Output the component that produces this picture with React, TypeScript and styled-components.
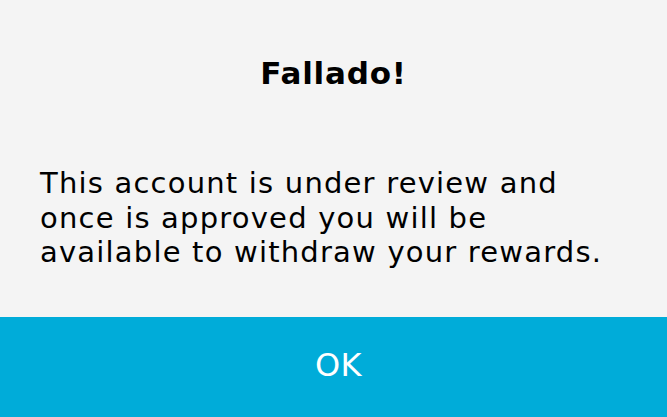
import React from "react";
import styled, { createGlobalStyle } from "styled-components";

const GlobalStyle = createGlobalStyle`
  html, body {
    margin: 0;
    padding: 0;
    height: 100%;
    background: #f4f4f4;
  }
  #root {
    height: 100%;
  }
`;

const Dialog = styled.div`
  display: flex;
  flex-direction: column;
  height: 100vh;
  font-family: "DejaVu Sans", "Open Sans", sans-serif;
  color: #000;
`;

const Body = styled.div`
  flex: 1;
  display: flex;
  flex-direction: column;
  padding: 0 40px;
`;

const Title = styled.h1`
  margin: 53px 0 0;
  font-size: 31px;
  line-height: 40px;
  font-weight: 700;
  letter-spacing: 0.8px;
  text-align: center;
`;

const Message = styled.p`
  margin: 73px 0 0;
  max-width: 580px;
  font-size: 29px;
  line-height: 34.5px;
  font-weight: 400;
  letter-spacing: 1.2px;
`;

const OkButton = styled.button`
  height: 100px;
  padding: 0 0 4px 10px;
  border: none;
  background: #00acd9;
  color: #fff;
  font-family: inherit;
  font-size: 32px;
  font-weight: 400;
  letter-spacing: 0.5px;
  cursor: pointer;
`;

const App = () => {
  return (
    <>
      <GlobalStyle />
      <Dialog>
        <Body>
          <Title>Fallado!</Title>
          <Message>
            This account is under review and once is approved you will be
            available to withdraw your rewards.
          </Message>
        </Body>
        <OkButton>OK</OkButton>
      </Dialog>
    </>
  );
};

export default App;
